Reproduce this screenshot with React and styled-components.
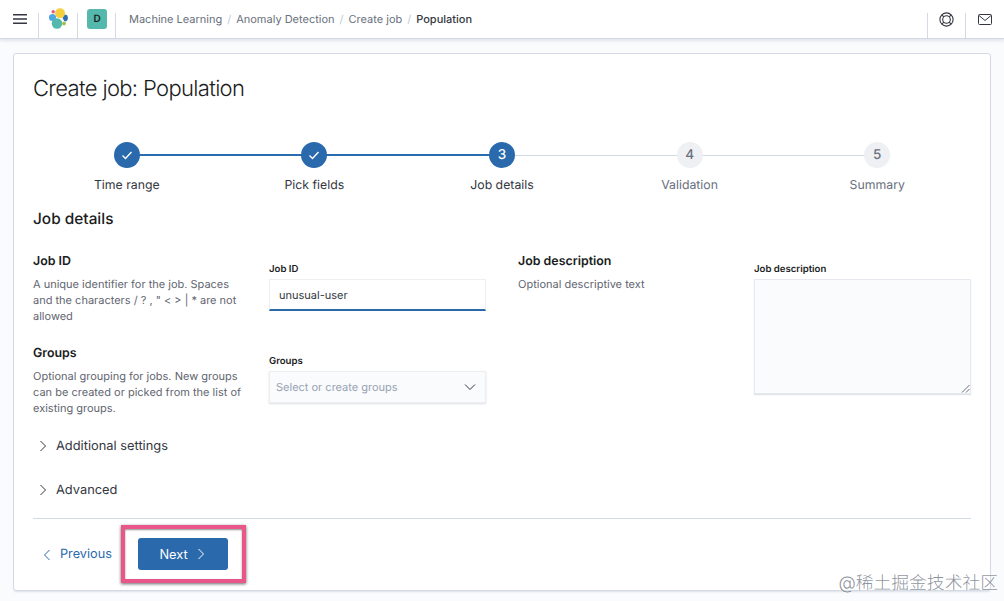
import styled, { createGlobalStyle } from 'styled-components';

const GlobalStyle = createGlobalStyle`
  html, body {
    margin: 0;
    padding: 0;
    background: #fafbfd;
    font-family: Inter, "Noto Sans", sans-serif;
    color: #1a1c21;
    text-rendering: geometricPrecision;
  }
  * { box-sizing: border-box; }
`;

const Page = styled.div`
  position: relative;
  width: 1004px;
  height: 601px;
  overflow: hidden;
`;

const Header = styled.header`
  display: flex;
  align-items: stretch;
  height: 39px;
  background: #fff;
  border-bottom: 1px solid #d3dae6;
  box-shadow: 0 2px 3px rgba(152, 162, 179, 0.25);
`;

const HeaderCell = styled.div`
  position: relative;
  display: flex;
  align-items: center;
  justify-content: center;
  width: ${props => props.width || '38px'};

  &::after {
    content: '';
    position: absolute;
    top: 13px;
    bottom: 0;
    ${props => (props.divided ? 'left: 0;' : 'right: 0;')}
    width: 1px;
    background: #d3dae6;
  }
`;

const Badge = styled.div`
  width: 20px;
  height: 20px;
  border-radius: 3px;
  background: #54b8ac;
  color: #1a1c21;
  font-size: 10px;
  font-weight: 600;
  display: flex;
  align-items: center;
  justify-content: center;
`;

const Crumbs = styled.nav`
  flex: 1;
  display: flex;
  align-items: center;
  padding-left: 13px;
  font-size: 11px;
  color: #69707d;
`;

const Slash = styled.span`
  color: #c2c9d6;
  margin: 0 5px;
`;

const CurrentCrumb = styled.span`
  color: #343741;
  font-weight: 500;
`;

const Panel = styled.main`
  margin: 14px 13px 0;
  height: 538px;
  padding: 20px 19px;
  background: #fff;
  border: 1px solid #d3dae6;
  border-radius: 3px;
  box-shadow: 0 2px 2px -1px rgba(152, 162, 179, 0.3);
`;

const Title = styled.h1`
  margin: 0;
  font-size: 22px;
  line-height: 30px;
  font-weight: 300;
  letter-spacing: -0.65px;
`;

const Steps = styled.ol`
  display: grid;
  grid-template-columns: repeat(5, 1fr);
  list-style: none;
  margin: 38px 0 0;
  padding: 0;
`;

const Step = styled.li`
  position: relative;
  display: flex;
  flex-direction: column;
  align-items: center;
  gap: 8px;

  &:not(:last-child)::after {
    content: '';
    position: absolute;
    top: ${props => (props.done ? '12px' : '13px')};
    left: 50%;
    width: 100%;
    height: ${props => (props.done ? '2px' : '1px')};
    background: ${props => (props.done ? '#2b6cb0' : '#d3dae6')};
  }
`;

const StepDot = styled.div`
  position: relative;
  z-index: 1;
  width: 26px;
  height: 26px;
  border-radius: 50%;
  display: flex;
  align-items: center;
  justify-content: center;
  font-size: 13.5px;
  font-weight: 500;
  background: ${props => (props.active ? '#2a69ac' : '#eef0f3')};
  color: ${props => (props.active ? '#fff' : '#69707d')};
`;

const StepLabel = styled.div`
  font-size: 12.3px;
  line-height: 18px;
  color: ${props => (props.muted ? '#69707d' : '#343741')};
`;

const SectionTitle = styled.h2`
  margin: 15px 0 0;
  font-size: 15.4px;
  line-height: 20px;
  font-weight: 500;
`;

const FormGrid = styled.div`
  display: grid;
  grid-template-columns: 453px 453px;
  column-gap: 32px;
  margin-top: 23px;
`;

const FormCol = styled.div`
  display: flex;
  flex-direction: column;
  gap: 20px;
`;

const FormRow = styled.div`
  display: grid;
  grid-template-columns: 212px 217px;
  column-gap: 24px;
`;

const FieldTitle = styled.h3`
  margin: 0 0 6px;
  font-size: 12.4px;
  line-height: 18px;
  font-weight: 600;
`;

const Help = styled.p`
  margin: 0;
  font-size: 11px;
  line-height: 16px;
  color: #5f6570;
`;

const Field = styled.div`
  padding-top: 11px;
`;

const FieldLabel = styled.label`
  display: block;
  font-size: 9.6px;
  line-height: 14px;
  font-weight: 600;
  margin: 0 0 2px;
`;

const JobInput = styled.div`
  height: 32px;
  padding: 0 9px;
  display: flex;
  align-items: center;
  background: #fff;
  border: 1px solid #eceef2;
  border-bottom: 2px solid #2a69ac;
  font-size: 11px;
  color: #343741;
`;

const GroupSelect = styled.div`
  height: 32px;
  padding: 0 9px 0 6px;
  display: flex;
  align-items: center;
  justify-content: space-between;
  background: #fafbfd;
  border: 1px solid #eceef2;
  box-shadow: 0 1px 2px rgba(152, 162, 179, 0.35);
  font-size: 11px;
  color: #98a2b3;
`;

const TextArea = styled.div`
  position: relative;
  height: 115px;
  background: #fafbfd;
  border: 1px solid #e6e9f0;
  box-shadow: 0 1px 1px rgba(152, 162, 179, 0.3);
`;

const ResizeGrip = styled.svg`
  position: absolute;
  right: 0;
  bottom: 0;
`;

const Toggle = styled.div`
  display: flex;
  align-items: center;
  gap: 7px;
  height: 20px;
  margin-top: ${props => props.top || '24px'};
  padding-left: 4px;
  font-size: 12.85px;
  color: #343741;
`;

const Rule = styled.hr`
  margin: 18px 0 0;
  border: 0;
  border-top: 1px solid #d3dae6;
`;

const Footer = styled.div`
  display: flex;
  align-items: center;
  margin-top: 6px;
`;

const PrevLink = styled.a`
  display: flex;
  align-items: center;
  gap: 7px;
  width: 88px;
  padding: 1px 0 0 8px;
  font-size: 12.7px;
  color: #2a69ac;
`;

const Highlight = styled.div`
  padding: 9px 14px 9px 13px;
  border: 4px solid #e9568a;
  box-shadow: 0 1px 3px rgba(0, 0, 0, 0.6), inset 0 1px 2px rgba(0, 0, 0, 0.45);
`;

const NextButton = styled.button`
  display: flex;
  align-items: center;
  justify-content: center;
  gap: 7px;
  width: 90px;
  height: 32px;
  border: 0;
  border-radius: 3px;
  background: #2a69ac;
  color: #fff;
  font-family: inherit;
  font-size: 12.8px;
  font-weight: 400;
`;

const Watermark = styled.div`
  position: absolute;
  right: 6px;
  bottom: 6px;
  font-family: Inter, "Noto Sans CJK SC", sans-serif;
  font-size: 17.8px;
  font-weight: 300;
  line-height: 22px;
  color: rgba(105, 112, 125, 0.75);
  text-shadow: 0 0 2px #fff;
`;

const Chevron = ({ dir = 'right', color = '#343741', size = 12 }) => (
  <svg width={size} height={size} viewBox="0 0 12 12" fill="none" stroke={color} strokeWidth="1">
    {dir === 'right' && <path d="M3.5 1l5 5-5 5" />}
    {dir === 'left' && <path d="M8.5 1l-5 5 5 5" />}
    {dir === 'down' && <path d="M1 3.5l5 5 5-5" />}
  </svg>
);

const Check = () => (
  <svg width="12" height="12" viewBox="0 0 12 12" fill="none" stroke="#fff" strokeWidth="1.4">
    <path d="M1.5 6.5l3 3 6-6.5" />
  </svg>
);

const ElasticLogo = () => (
  <svg width="20" height="22" viewBox="0 0 20 22">
    <circle cx="3.5" cy="9.5" r="3.6" fill="#4fa8df" />
    <circle cx="4.2" cy="3.8" r="1.7" fill="#e8558f" />
    <path d="M15.5 6.5a3.4 3.4 0 0 1 0 6.8L13.5 10z" fill="#2a6fb0" />
    <circle cx="11" cy="5.2" r="5" fill="#f5cf3d" />
    <circle cx="8" cy="15.5" r="5.2" fill="#54b8ac" />
    <circle cx="15" cy="15.5" r="1.9" fill="#9cc24a" />
  </svg>
);

const steps = [
  { label: 'Time range', state: 'done' },
  { label: 'Pick fields', state: 'done' },
  { label: 'Job details', state: 'current', n: 3 },
  { label: 'Validation', state: 'todo', n: 4 },
  { label: 'Summary', state: 'todo', n: 5 },
];

export default function App() {
  return (
    <Page>
      <GlobalStyle />
      <Header>
        <HeaderCell width="39px">
          <svg width="14" height="10" viewBox="0 0 14 10" fill="none" stroke="#343741" strokeWidth="1.4">
            <path d="M0 .8h14M0 5h14M0 9.2h14" />
          </svg>
        </HeaderCell>
        <HeaderCell width="39px"><ElasticLogo /></HeaderCell>
        <HeaderCell width="38px"><Badge>D</Badge></HeaderCell>
        <Crumbs>
          Machine Learning<Slash>/</Slash>Anomaly Detection<Slash>/</Slash>Create job<Slash>/</Slash>
          <CurrentCrumb>Population</CurrentCrumb>
        </Crumbs>
        <HeaderCell divided>
          <svg width="15" height="15" viewBox="0 0 15 15" fill="none" stroke="#343741" strokeWidth="1.1">
            <circle cx="7.5" cy="7.5" r="6.6" />
            <circle cx="7.5" cy="7.5" r="3.8" />
            <path d="M2.8 2.8l2 2M12.2 2.8l-2 2M2.8 12.2l2-2M12.2 12.2l-2-2" />
          </svg>
        </HeaderCell>
        <HeaderCell width="39px" divided>
          <svg width="14" height="11" viewBox="0 0 14 11" fill="none" stroke="#343741" strokeWidth="1">
            <rect x="0.5" y="0.5" width="13" height="10" rx="1" />
            <path d="M1 1.5l6 5 6-5" />
          </svg>
        </HeaderCell>
      </Header>

      <Panel>
        <Title>Create job: Population</Title>

        <Steps>
          {steps.map(step => (
            <Step key={step.label} done={step.state === 'done'}>
              <StepDot active={step.state !== 'todo'}>
                {step.state === 'done' ? <Check /> : step.n}
              </StepDot>
              <StepLabel muted={step.state === 'todo'}>{step.label}</StepLabel>
            </Step>
          ))}
        </Steps>

        <SectionTitle>Job details</SectionTitle>

        <FormGrid>
          <FormCol>
            <FormRow>
              <div>
                <FieldTitle>Job ID</FieldTitle>
                <Help>
                  A unique identifier for the job. Spaces and the characters / ? , " &lt; &gt; | * are not allowed
                </Help>
              </div>
              <Field>
                <FieldLabel>Job ID</FieldLabel>
                <JobInput>unusual-user</JobInput>
              </Field>
            </FormRow>
            <FormRow>
              <div>
                <FieldTitle>Groups</FieldTitle>
                <Help>
                  Optional grouping for jobs. New groups can be created or picked from the list of existing groups.
                </Help>
              </div>
              <Field>
                <FieldLabel>Groups</FieldLabel>
                <GroupSelect>
                  Select or create groups
                  <Chevron dir="down" />
                </GroupSelect>
              </Field>
            </FormRow>
          </FormCol>
          <FormCol>
            <FormRow>
              <div>
                <FieldTitle>Job description</FieldTitle>
                <Help>Optional descriptive text</Help>
              </div>
              <Field>
                <FieldLabel>Job description</FieldLabel>
                <TextArea>
                  <ResizeGrip width="9" height="9" viewBox="0 0 9 9" fill="none" stroke="#69707d">
                    <path d="M1 8.5L8.5 1M5 8.5L8.5 5" />
                  </ResizeGrip>
                </TextArea>
              </Field>
            </FormRow>
          </FormCol>
        </FormGrid>

        <Toggle top="20px"><Chevron />Additional settings</Toggle>
        <Toggle><Chevron />Advanced</Toggle>

        <Rule />

        <Footer>
          <PrevLink><Chevron dir="left" color="#2a69ac" />Previous</PrevLink>
          <Highlight>
            <NextButton>Next<Chevron color="#fff" /></NextButton>
          </Highlight>
        </Footer>
      </Panel>

      <Watermark>@稀土掘金技术社区</Watermark>
    </Page>
  );
}
